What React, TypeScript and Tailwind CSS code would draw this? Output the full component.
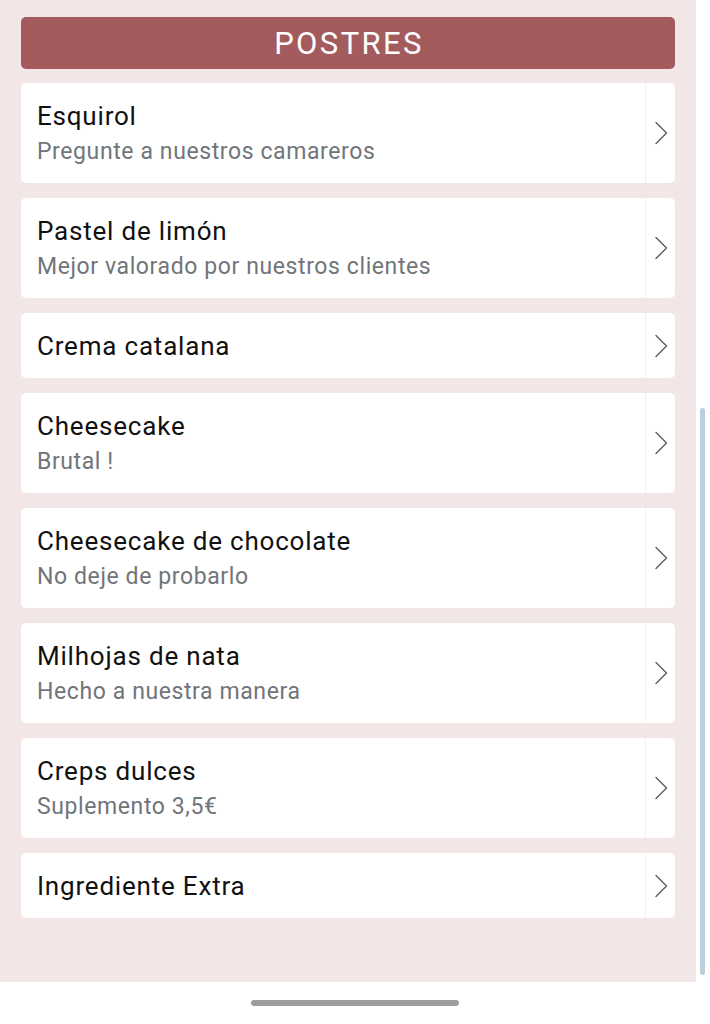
const items = [
  { name: "Esquirol", note: "Pregunte a nuestros camareros" },
  { name: "Pastel de limón", note: "Mejor valorado por nuestros clientes" },
  { name: "Crema catalana" },
  { name: "Cheesecake", note: "Brutal !" },
  { name: "Cheesecake de chocolate", note: "No deje de probarlo" },
  { name: "Milhojas de nata", note: "Hecho a nuestra manera" },
  { name: "Creps dulces", note: "Suplemento 3,5€" },
  { name: "Ingrediente Extra" },
];

const Chevron = () => (
  <svg width="14" height="24" viewBox="0 0 14 24" fill="none">
    <path d="M2 1.5 L12.5 12 L2 22.5" stroke="#5a5e62" strokeWidth="1.4" strokeLinecap="round" strokeLinejoin="round" />
  </svg>
);

export default function App() {
  return (
    <div
      className="flex h-[1024px] w-[710px] flex-col bg-white"
      style={{ fontFamily: "Roboto, 'Noto Sans', sans-serif" }}
    >
      <div className="flex h-[982px]">
        <div className="flex w-[696px] flex-col bg-[#f2e6e6] px-[21px] pt-[17px]">
          <div className="mb-[14px] flex h-[52px] items-center justify-center rounded-[5px] bg-[#a35b5e]">
            <span className="pl-[2px] text-[31px] leading-none tracking-[2.4px] text-white">POSTRES</span>
          </div>

          <div className="flex flex-col gap-[15px]">
            {items.map((item) => (
              <div key={item.name} className="flex rounded-[5px] bg-white">
                <div
                  className={
                    item.note
                      ? "flex flex-1 flex-col justify-center px-4 pt-[16px] pb-[14px]"
                      : "flex flex-1 flex-col justify-center px-4 pt-[16px] pb-[15px]"
                  }
                >
                  <span className="text-[26px] leading-[34px] tracking-[0.8px] text-[#111]">{item.name}</span>
                  {item.note && (
                    <span className="mt-[2px] text-[23px] leading-[34px] tracking-[0.6px] text-[#70757a]">
                      {item.note}
                    </span>
                  )}
                </div>
                <div className="flex w-[30px] items-center justify-center border-l border-[#f1f1f1]">
                  <Chevron />
                </div>
              </div>
            ))}
          </div>
        </div>

        <div className="flex w-[14px] flex-col items-center pt-[408px]">
          <div className="ml-[-2px] h-[567px] w-[5px] rounded-full bg-[#bccfdb]"></div>
        </div>
      </div>

      <div className="flex flex-1 items-center justify-center">
        <div className="h-[6px] w-[208px] rounded-full bg-[#9e9e9e]"></div>
      </div>
    </div>
  );
}
